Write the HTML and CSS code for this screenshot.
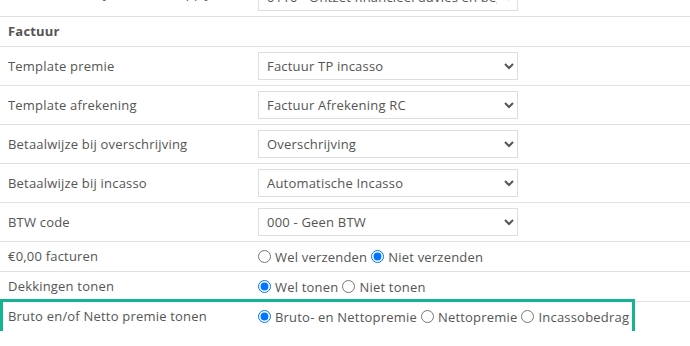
FILE: index.html
```html
<!DOCTYPE html>
<html lang="nl">
<head>
<meta charset="utf-8">
<title>Factuur</title>
<link rel="stylesheet" href="styles.css">
</head>
<body>
<div class="form">
  <div class="row sel first">
    <div class="label">Verantwoordelijke maatschappij</div>
    <div class="value"><select><option>0110 - Ontzet financieel advies en begeleiding</option></select></div>
  </div>
  <div class="row head">
    <div class="label">Factuur</div>
    <div class="value"></div>
  </div>
  <div class="row sel">
    <div class="label">Template premie</div>
    <div class="value"><select><option>Factuur TP incasso</option></select></div>
  </div>
  <div class="row sel">
    <div class="label">Template afrekening</div>
    <div class="value"><select><option>Factuur Afrekening RC</option></select></div>
  </div>
  <div class="row sel">
    <div class="label">Betaalwijze bij overschrijving</div>
    <div class="value"><select><option>Overschrijving</option></select></div>
  </div>
  <div class="row sel">
    <div class="label">Betaalwijze bij incasso</div>
    <div class="value"><select><option>Automatische Incasso</option></select></div>
  </div>
  <div class="row sel">
    <div class="label">BTW code</div>
    <div class="value"><select><option>000 - Geen BTW</option></select></div>
  </div>
  <div class="row radio">
    <div class="label">€0,00 facturen</div>
    <div class="value">
      <label class="opt"><input type="radio" name="nul">Wel verzenden</label>
      <label class="opt"><input type="radio" name="nul" checked>Niet verzenden</label>
    </div>
  </div>
  <div class="row radio">
    <div class="label">Dekkingen tonen</div>
    <div class="value">
      <label class="opt"><input type="radio" name="dek" checked>Wel tonen</label>
      <label class="opt"><input type="radio" name="dek">Niet tonen</label>
    </div>
  </div>
  <div class="row radio last">
    <div class="highlight"></div>
    <div class="label">Bruto en/of Netto premie tonen</div>
    <div class="value">
      <label class="opt"><input type="radio" name="bn" checked>Bruto- en Nettopremie</label>
      <label class="opt"><input type="radio" name="bn">Nettopremie</label>
      <label class="opt"><input type="radio" name="bn">Incassobedrag</label>
    </div>
  </div>
</div>
</body>
</html>
```

FILE: styles.css
```css
html, body {
  margin: 0;
  padding: 0;
  background: #ffffff;
}
body {
  font-family: "Open Sans", "Liberation Sans", sans-serif;
  font-size: 13px;
  letter-spacing: 0.2px;
  color: #555555;
  overflow: hidden;
}
.form {
  margin-top: -22px;
}
.row {
  position: relative;
  display: grid;
  grid-template-columns: 250px 1fr;
  align-items: center;
  border-bottom: 1px solid #e0e0e0;
}
.row.last {
  border-bottom: none;
}
.row.sel {
  height: 38px;
}
.row.head, .row.radio {
  height: 29px;
}
.label {
  padding-left: 8px;
  padding-bottom: 1px;
  white-space: nowrap;
  overflow: hidden;
}
.first .label {
  padding-bottom: 8px;
}
.head .label {
  font-weight: 700;
}
.value {
  padding-left: 8px;
  display: flex;
  align-items: center;
  white-space: nowrap;
}
select {
  width: 260px;
  height: 28px;
  border: 1px solid #dddddd;
  border-radius: 0;
  background: #ffffff;
  color: #555555;
  font-family: inherit;
  font-size: 13px;
  letter-spacing: 0.2px;
  padding: 0 4px 0 4px;
  outline: none;
}
.opt {
  display: inline-flex;
  align-items: center;
  margin-right: 4px;
}
.opt input {
  margin: 0 4px 0 0;
  width: 13px;
  height: 13px;
}
.highlight {
  position: absolute;
  left: 0;
  top: -3px;
  width: 629px;
  height: 31px;
  border: 3px solid #14b394;
  pointer-events: none;
}
```
